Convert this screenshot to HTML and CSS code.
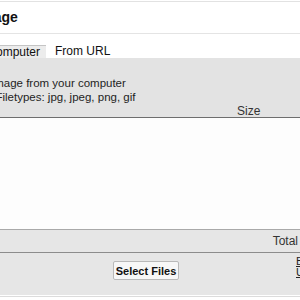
FILE: index.html
```html
<!DOCTYPE html>
<html lang="en">
<head>
  <meta charset="UTF-8" />
  <title>Upload Image</title>
  <link rel="stylesheet" href="styles.css">
</head>
<body>
  <div class="dialog">
    <h1 class="title">Upload Image</h1>

    <div class="tabs">
      <span class="tab active">My Computer</span>
      <span class="tab">From URL</span>
    </div>

    <div class="panel">
      <p class="intro">Upload an image from your computer</p>
      <p class="types">Allowed Filetypes: jpg, jpeg, png, gif</p>
      <div class="list-head">
        <span class="col-name"></span>
        <span class="col-size">Size</span>
      </div>
    </div>

    <div class="file-list"></div>

    <div class="total-row">
      <span class="total">Total</span>
    </div>

    <div class="actions">
      <button class="button">Select Files</button>
      <div class="links">
        <a href="#">Browse</a>
        <a href="#">Upload</a>
      </div>
    </div>
  </div>
</body>
</html>
```

FILE: styles.css
```css
* {
  margin: 0;
  padding: 0;
  box-sizing: border-box;
}

html, body {
  width: 300px;
  height: 300px;
  overflow: hidden;
  background: #ffffff;
}

body {
  font-family: 'Liberation Sans', Arial, sans-serif;
  font-size: 12px;
  color: #1e1e1e;
}

.dialog {
  margin-left: -100px;
  margin-top: 1px;
  width: 440px;
  border-top: 1px solid #e2e2e2;
  border-bottom: 1px solid #dcdcdc;
}

.title {
  height: 32px;
  padding-left: 26px;
  line-height: 31px;
  font-size: 14px;
  font-weight: bold;
  color: #111;
  border-bottom: 1px solid #e4e4e4;
}

.tabs {
  display: flex;
  align-items: flex-end;
  height: 24px;
  padding-left: 60px;
  gap: 1px;
}

.tab {
  height: 13px;
  padding: 0 8px;
  line-height: 12px;
  background: #ffffff;
  color: #111;
}

.tab.active {
  padding: 0 6px 0 8px;
  background: #ececec;
  border-top: 1px solid #c4c4c4;
}

.panel {
  background: #e3e3e3;
  padding-top: 18px;
  border-bottom: 1px solid #6e6e6e;
}

.intro,
.types {
  font-size: 11.5px;
  line-height: 14px;
}

.intro {
  padding-left: 36px;
}

.types {
  padding-left: 52px;
}

.list-head {
  display: flex;
  height: 13px;
  line-height: 14px;
}

.col-name {
  width: 337px;
}

.col-size {
  color: #333;
}

.file-list {
  height: 111px;
  background: #fdfdfd;
}

.total-row {
  display: flex;
  justify-content: flex-end;
  height: 24px;
  padding-right: 42px;
  line-height: 22px;
  background: #e6e6e6;
  border-top: 1px solid #a9a9a9;
  border-bottom: 1px solid #8c8c8c;
}

.total {
  color: #333;
}

.actions {
  display: flex;
  align-items: flex-start;
  height: 43px;
  background: #e6e6e6;
  border-bottom: 1px solid #ffffff;
  padding-top: 8px;
}

.button {
  margin-left: 213px;
  width: 66px;
  height: 19px;
  font-family: 'Liberation Sans', Arial, sans-serif;
  font-size: 11px;
  font-weight: bold;
  color: #111;
  background: #f7f7f7;
  border: 1px solid #b9b9b9;
  border-radius: 2px;
}

.links {
  display: flex;
  flex-direction: column;
  margin-left: 117px;
  margin-top: -5px;
  font-size: 11px;
  line-height: 11px;
}

.links a {
  color: #222;
}
```
